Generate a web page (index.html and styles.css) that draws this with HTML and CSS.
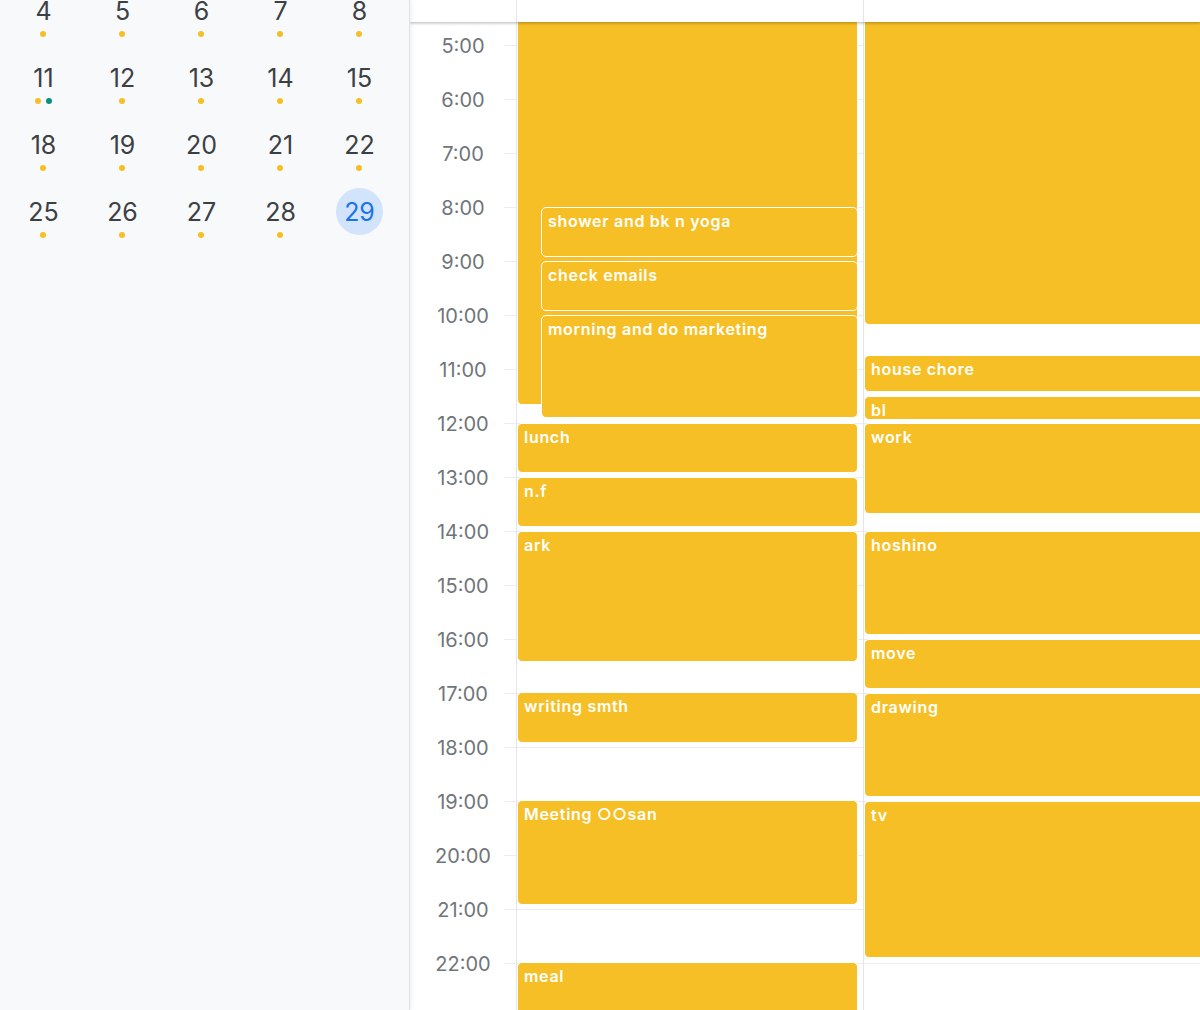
FILE: index.html
```html
<!DOCTYPE html>
<html lang="en">
<head>
    <meta charset="UTF-8">
    <meta name="viewport" content="width=device-width, initial-scale=1.0">
    <title>Week Schedule</title>
    <link rel="stylesheet" href="styles.css">
</head>
<body>
    <div class="app">
        <aside class="sidebar">
            <div class="month">
                <div class="day-cell"><span class="date">4</span><span class="dots"><i class="dot"></i></span></div>
                <div class="day-cell"><span class="date">5</span><span class="dots"><i class="dot"></i></span></div>
                <div class="day-cell"><span class="date">6</span><span class="dots"><i class="dot"></i></span></div>
                <div class="day-cell"><span class="date">7</span><span class="dots"><i class="dot"></i></span></div>
                <div class="day-cell"><span class="date">8</span><span class="dots"><i class="dot"></i></span></div>

                <div class="day-cell"><span class="date">11</span><span class="dots"><i class="dot"></i><i class="dot teal"></i></span></div>
                <div class="day-cell"><span class="date">12</span><span class="dots"><i class="dot"></i></span></div>
                <div class="day-cell"><span class="date">13</span><span class="dots"><i class="dot"></i></span></div>
                <div class="day-cell"><span class="date">14</span><span class="dots"><i class="dot"></i></span></div>
                <div class="day-cell"><span class="date">15</span><span class="dots"><i class="dot"></i></span></div>

                <div class="day-cell"><span class="date">18</span><span class="dots"><i class="dot"></i></span></div>
                <div class="day-cell"><span class="date">19</span><span class="dots"><i class="dot"></i></span></div>
                <div class="day-cell"><span class="date">20</span><span class="dots"><i class="dot"></i></span></div>
                <div class="day-cell"><span class="date">21</span><span class="dots"><i class="dot"></i></span></div>
                <div class="day-cell"><span class="date">22</span><span class="dots"><i class="dot"></i></span></div>

                <div class="day-cell"><span class="date">25</span><span class="dots"><i class="dot"></i></span></div>
                <div class="day-cell"><span class="date">26</span><span class="dots"><i class="dot"></i></span></div>
                <div class="day-cell"><span class="date">27</span><span class="dots"><i class="dot"></i></span></div>
                <div class="day-cell"><span class="date">28</span><span class="dots"><i class="dot"></i></span></div>
                <div class="day-cell"><span class="date today">29</span><span class="dots"></span></div>
            </div>
        </aside>

        <main class="schedule">
            <div class="schedule-head">
                <div class="gutter"></div>
                <div class="head-cell"></div>
                <div class="head-cell"></div>
            </div>

            <div class="schedule-body">
                <!-- scrolled so that 5:00 sits near the top -->
                <div class="timeline">
                    <div class="hours">
                        <div class="hour"><span></span></div>
                        <div class="hour"><span>1:00</span></div>
                        <div class="hour"><span>2:00</span></div>
                        <div class="hour"><span>3:00</span></div>
                        <div class="hour"><span>4:00</span></div>
                        <div class="hour"><span>5:00</span></div>
                        <div class="hour"><span>6:00</span></div>
                        <div class="hour"><span>7:00</span></div>
                        <div class="hour"><span>8:00</span></div>
                        <div class="hour"><span>9:00</span></div>
                        <div class="hour"><span>10:00</span></div>
                        <div class="hour"><span>11:00</span></div>
                        <div class="hour"><span>12:00</span></div>
                        <div class="hour"><span>13:00</span></div>
                        <div class="hour"><span>14:00</span></div>
                        <div class="hour"><span>15:00</span></div>
                        <div class="hour"><span>16:00</span></div>
                        <div class="hour"><span>17:00</span></div>
                        <div class="hour"><span>18:00</span></div>
                        <div class="hour"><span>19:00</span></div>
                        <div class="hour"><span>20:00</span></div>
                        <div class="hour"><span>21:00</span></div>
                        <div class="hour"><span>22:00</span></div>
                        <div class="hour"><span>23:00</span></div>
                    </div>

                    <!-- 54px per hour -->
                    <div class="day">
                        <div class="event" style="top:180px;height:450px"></div>
                        <div class="event inset" style="top:432px;height:50px">shower and bk n yoga</div>
                        <div class="event inset" style="top:486px;height:50px">check emails</div>
                        <div class="event inset" style="top:540px;height:103px">morning and do marketing</div>
                        <div class="event" style="top:648px;height:50px">lunch</div>
                        <div class="event" style="top:702px;height:50px">n.f</div>
                        <div class="event" style="top:756px;height:131px">ark</div>
                        <div class="event" style="top:917px;height:51px">writing smth</div>
                        <div class="event" style="top:1025px;height:105px">Meeting ○○san</div>
                        <div class="event" style="top:1187px;height:54px">meal</div>
                    </div>

                    <div class="day">
                        <div class="event" style="top:180px;height:370px"></div>
                        <div class="event" style="top:580px;height:37px">house chore</div>
                        <div class="event" style="top:621px;height:24px">bl</div>
                        <div class="event" style="top:648px;height:91px">work</div>
                        <div class="event" style="top:756px;height:104px">hoshino</div>
                        <div class="event" style="top:864px;height:50px">move</div>
                        <div class="event" style="top:918px;height:104px">drawing</div>
                        <div class="event" style="top:1026px;height:157px">tv</div>
                    </div>
                </div>
            </div>
        </main>
    </div>
</body>
</html>
```

FILE: styles.css
```css
* {
    box-sizing: border-box;
}
html,
body {
    margin: 0;
    padding: 0;
    height: 100%;
}
body {
    font-family: Inter, "Noto Sans", "Noto Sans CJK JP", sans-serif;
    background-color: #fff;
    overflow: hidden;
}
.app {
    display: flex;
    height: 100vh;
}

/* mini month on the left */
.sidebar {
    width: 410px;
    flex-shrink: 0;
    background-color: #f8f9fb;
    border-right: 1px solid #dfe1e5;
    box-shadow: 1px 0 4px rgba(0,0,0,0.08);
    position: relative;
    z-index: 3;
    overflow: hidden;
}
.month {
    display: grid;
    grid-template-columns: repeat(5, 79px);
    grid-auto-rows: 67px;
    padding-left: 4px;
    margin-top: -23px;
}
.day-cell {
    display: flex;
    flex-direction: column;
    align-items: center;
}
.date {
    width: 47px;
    height: 47px;
    margin-top: 10px;
    border-radius: 50%;
    display: flex;
    align-items: center;
    justify-content: center;
    font-size: 25px;
    color: #3c4043;
}
.date.today {
    background-color: #d2e3fc;
    color: #1a73e8;
}
.dots {
    display: flex;
    gap: 5px;
    height: 6px;
    margin-top: -3px;
    margin-left: -1px;
}
.dot {
    width: 6px;
    height: 6px;
    border-radius: 50%;
    background-color: #f6bf26;
}
.dot.teal {
    background-color: #0b8f7e;
}

/* day view */
.schedule {
    flex: 1;
    min-width: 0;
    display: flex;
    flex-direction: column;
    overflow: hidden;
}
.schedule-head {
    height: 22px;
    flex-shrink: 0;
    display: flex;
    background-color: #fff;
    box-shadow: 0 1px 3px rgba(0,0,0,0.3);
    position: relative;
    z-index: 2;
}
.gutter {
    width: 106px;
    flex-shrink: 0;
}
.head-cell {
    width: 347px;
    flex-shrink: 0;
    border-left: 1px solid #e4e4ee;
}
.schedule-body {
    flex: 1;
    overflow: hidden;
}
.timeline {
    display: flex;
    margin-top: -247px;
}
.hours {
    width: 106px;
    flex-shrink: 0;
    /* short tick next to each label */
    background-image: linear-gradient(#ebebf0 1px, transparent 1px);
    background-size: 12px 54px;
    background-position: right top;
    background-repeat: repeat-y;
}
.hour {
    height: 54px;
    font-size: 20px;
    color: #70757a;
    text-align: center;
}
.hour span {
    display: block;
    line-height: 22px;
    transform: translateY(-10px);
}
.day {
    width: 347px;
    height: 1296px;
    flex-shrink: 0;
    position: relative;
    border-left: 1px solid #e4e4ee;
    background-image: linear-gradient(#ebebf0 1px, transparent 1px);
    background-size: 100% 54px;
}
.event {
    position: absolute;
    left: 0;
    right: 5px;
    padding: 3px 6px;
    background-color: #f6bf26;
    border: 1px solid #fff;
    border-radius: 5px;
    color: #fff;
    font-size: 16px;
    font-weight: 600;
    line-height: 20px;
    letter-spacing: 0.7px;
    overflow: hidden;
    white-space: nowrap;
}
.event.inset {
    left: 24px;
    z-index: 1;
}
```
